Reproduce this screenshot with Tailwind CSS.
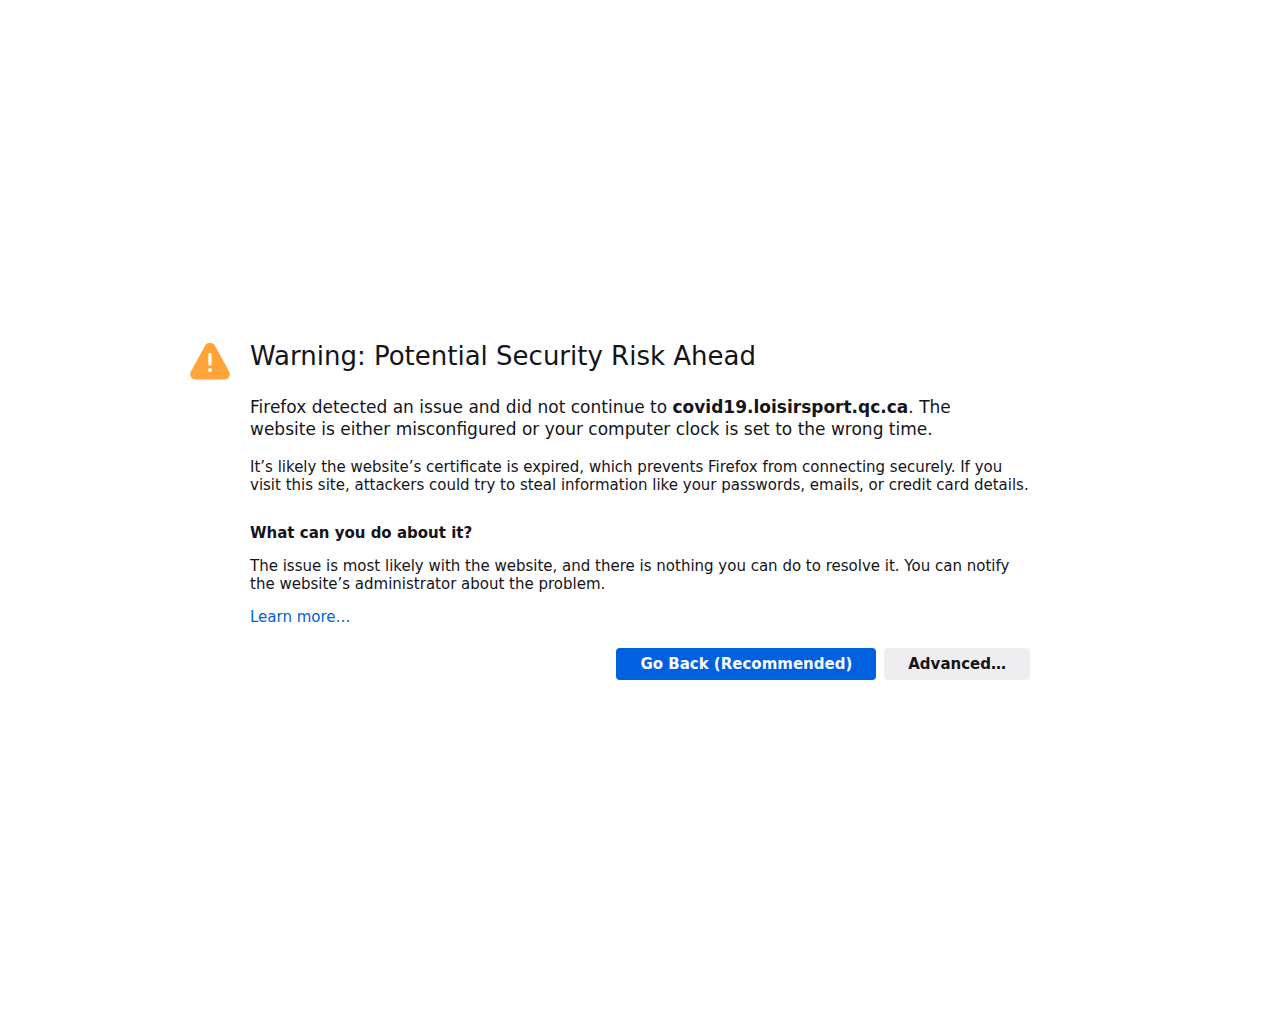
<!DOCTYPE html>
<html lang="en">
<head>
  <meta charset="UTF-8">
  <meta name="viewport" content="width=device-width, initial-scale=1">
  <title>Warning: Potential Security Risk Ahead</title>
  <script src="https://cdn.jsdelivr.net/npm/@tailwindcss/browser@4"></script>
</head>
<body class="bg-white text-[#15141a] font-['DejaVu_Sans',sans-serif] text-[15px] leading-[18px] min-h-screen flex flex-col items-center justify-center px-12 pb-1">
  <main class="flex gap-5 w-full max-w-[900px] pr-[60px]">
    <svg class="w-10 h-10 shrink-0 mt-[2px]" viewBox="0 0 40 40" aria-hidden="true">
      <path fill="#ffa436" d="M15.1 3.6a5.6 5.6 0 0 1 9.8 0l14.2 26a5.3 5.3 0 0 1-4.7 7.9H5.6a5.3 5.3 0 0 1-4.7-7.9z"/>
      <path stroke="#fff" stroke-width="3.3" stroke-linecap="round" d="M20 12.6v9.4"/>
      <circle fill="#fff" cx="20" cy="28" r="1.9"/>
    </svg>
    <div class="flex-1">
      <h1 class="text-[26px] leading-8">Warning: Potential Security Risk Ahead</h1>
      <p class="mt-6 max-w-[760px] text-[17px] leading-[22px]">Firefox detected an issue and did not continue to <b>covid19.loisirsport.qc.ca</b>. The website is either misconfigured or your computer clock is set to the wrong time.</p>
      <p class="mt-[18px]">It’s likely the website’s certificate is expired, which prevents Firefox from connecting securely. If you visit this site, attackers could try to steal information like your passwords, emails, or credit card details.</p>
      <h2 class="mt-[30px] font-bold">What can you do about it?</h2>
      <p class="mt-[15px]">The issue is most likely with the website, and there is nothing you can do to resolve it. You can notify the website’s administrator about the problem.</p>
      <p class="mt-[15px]"><a href="#" class="text-[#0061e0] hover:underline">Learn more…</a></p>
      <div class="mt-[22px] flex flex-wrap justify-end gap-2">
        <button type="button" class="h-8 px-6 rounded-sm bg-[#0061e0] text-[#fbfbfe] font-bold">Go Back (Recommended)</button>
        <button type="button" class="h-8 px-6 rounded-sm bg-[#eeeef0] font-bold">Advanced…</button>
      </div>
    </div>
  </main>
</body>
</html>
